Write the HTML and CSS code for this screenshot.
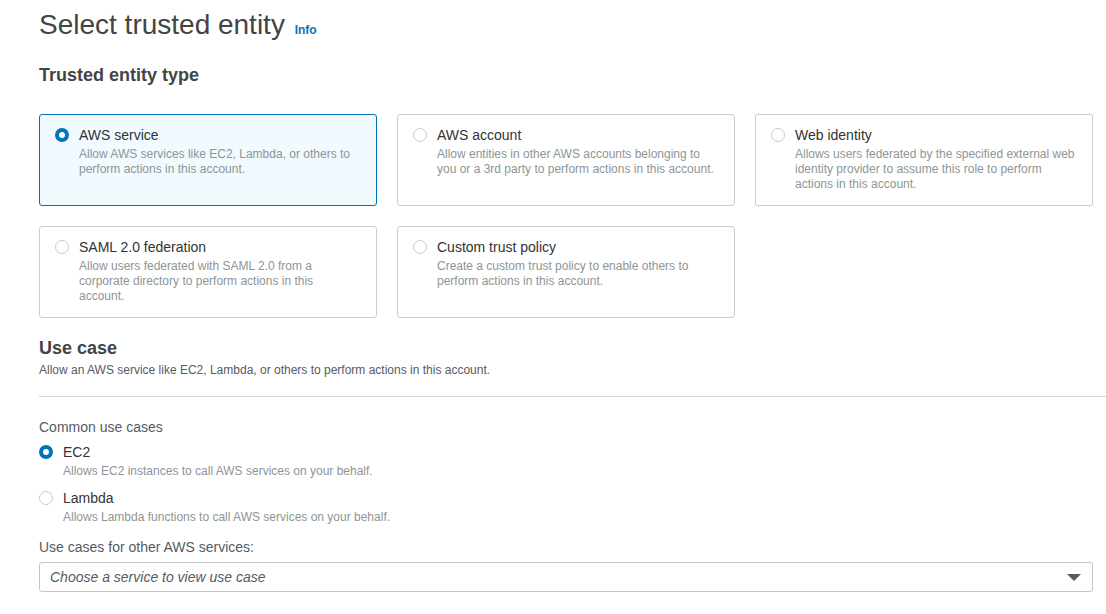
FILE: index.html
```html
<!DOCTYPE html>
<html>
<head>
<meta charset="utf-8">
<link rel="stylesheet" href="styles.css">
</head>
<body>
<div class="page">
  <h1 class="title">Select trusted entity <a class="info">Info</a></h1>
  <h2 class="section-title">Trusted entity type</h2>
  <div class="cards">
    <div class="card selected">
      <span class="radio checked"></span>
      <div class="card-body">
        <div class="card-title">AWS service</div>
        <div class="card-desc">Allow AWS services like EC2, Lambda, or others to perform actions in this account.</div>
      </div>
    </div>
    <div class="card">
      <span class="radio"></span>
      <div class="card-body">
        <div class="card-title">AWS account</div>
        <div class="card-desc">Allow entities in other AWS accounts belonging to you or a 3rd party to perform actions in this account.</div>
      </div>
    </div>
    <div class="card">
      <span class="radio"></span>
      <div class="card-body">
        <div class="card-title">Web identity</div>
        <div class="card-desc">Allows users federated by the specified external web identity provider to assume this role to perform actions in this account.</div>
      </div>
    </div>
    <div class="card">
      <span class="radio"></span>
      <div class="card-body">
        <div class="card-title">SAML 2.0 federation</div>
        <div class="card-desc">Allow users federated with SAML 2.0 from a corporate directory to perform actions in this account.</div>
      </div>
    </div>
    <div class="card">
      <span class="radio"></span>
      <div class="card-body">
        <div class="card-title">Custom trust policy</div>
        <div class="card-desc">Create a custom trust policy to enable others to perform actions in this account.</div>
      </div>
    </div>
  </div>

  <h2 class="section-title use-case">Use case</h2>
  <div class="section-desc">Allow an AWS service like EC2, Lambda, or others to perform actions in this account.</div>
  <div class="divider"></div>

  <div class="field-label common">Common use cases</div>
  <div class="options">
    <div class="option">
      <span class="radio checked"></span>
      <div class="option-body">
        <div class="option-title">EC2</div>
        <div class="option-desc">Allows EC2 instances to call AWS services on your behalf.</div>
      </div>
    </div>
    <div class="option">
      <span class="radio"></span>
      <div class="option-body">
        <div class="option-title">Lambda</div>
        <div class="option-desc">Allows Lambda functions to call AWS services on your behalf.</div>
      </div>
    </div>
  </div>

  <div class="field-label other">Use cases for other AWS services:</div>
  <div class="select">
    <span class="placeholder">Choose a service to view use case</span>
    <span class="caret"></span>
  </div>
</div>
</body>
</html>
```
FILE: styles.css
```css
* { box-sizing: border-box; }
html, body { margin: 0; padding: 0; background: #fff; }
body {
  font-family: "Liberation Sans", Arial, sans-serif;
  color: #16191f;
}
.page {
  padding: 8px 13px 0 39px;
}
.title {
  margin: 0;
  font-size: 28px;
  line-height: 34px;
  font-weight: 400;
  color: #444;
}
.info {
  font-size: 12px;
  font-weight: 700;
  color: #0073bb;
  margin-left: 2px;
}
.section-title {
  margin: 17px 0 0;
  font-size: 18px;
  line-height: 22px;
  font-weight: 700;
  color: #444;
}
.cards {
  margin-top: 28px;
  display: grid;
  grid-template-columns: repeat(3, 338px);
  grid-auto-rows: 92px;
  gap: 20px;
}
.card {
  display: flex;
  gap: 10px;
  border: 1px solid #ccc;
  border-radius: 3px;
  padding: 10px 16px 13px 15px;
  background: #fff;
}
.card.selected {
  border-color: #0073bb;
  background: #f1faff;
}
.radio {
  flex: none;
  width: 14px;
  height: 14px;
  margin-top: 3px;
  border-radius: 50%;
  border: 1px solid #c6cccd;
  background: #fff;
}
.radio.checked {
  border: 4.5px solid #0073bb;
}
.card-title, .option-title {
  font-size: 14px;
  line-height: 20px;
  color: #333;
}
.card-desc, .option-desc {
  margin-top: 2px;
  font-size: 12px;
  line-height: 15px;
  color: #8d9596;
}
.use-case {
  margin-top: 19px;
}
.section-desc {
  margin-top: 4px;
  font-size: 12px;
  line-height: 15px;
  color: #545b64;
}
.divider {
  margin-top: 18px;
  margin-right: -13px;
  height: 1px;
  background: #d5d5d5;
}
.field-label {
  font-size: 14px;
  line-height: 20px;
  color: #545b64;
}
.common { margin-top: 20px; }
.options {
  margin-top: 5px;
  display: flex;
  flex-direction: column;
  gap: 9px;
}
.option {
  display: flex;
  gap: 10px;
}
.other { margin-top: 12px; }
.select {
  margin-top: 5px;
  height: 30px;
  border: 1px solid #c6c6c6;
  border-radius: 3px;
  display: flex;
  align-items: center;
  justify-content: space-between;
  padding: 0 11px 0 10px;
}
.placeholder {
  font-size: 14px;
  font-style: italic;
  color: #545b64;
}
.caret {
  width: 0;
  height: 0;
  border-left: 7px solid transparent;
  border-right: 7px solid transparent;
  border-top: 7px solid #545b64;
}
```
